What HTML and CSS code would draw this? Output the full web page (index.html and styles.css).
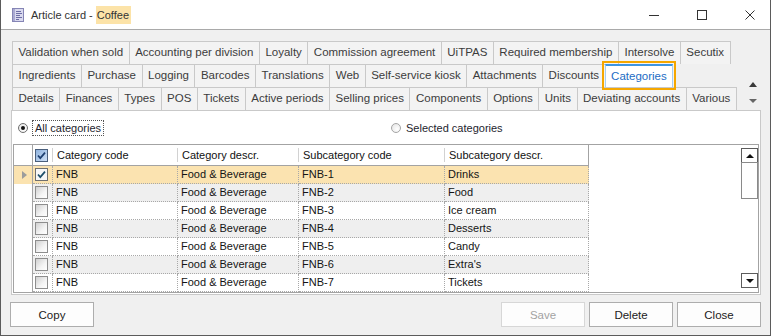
FILE: index.html
```html
<!DOCTYPE html>
<html>
<head>
    <link rel="stylesheet" href="styles.css">
</head>
<body>
    <div class="window">
        <div class="titlebar">
            <svg class="app-icon" width="12" height="14" viewBox="0 0 12 14">
                <rect x="0.5" y="0.5" width="11" height="13" fill="#d9d9ee" stroke="#8585b5"/>
                <rect x="1" y="1" width="2" height="12" fill="#a9a9d2"/>
                <path d="M4 3.5h5M4 5.5h6M4 7.5h4M4 9.5h6M4 11.5h3" stroke="#6d6da5" stroke-width="1"/>
            </svg>
            <span class="title">Article card - <span class="title-hl">Coffee</span></span>
            <div class="win-controls">
                <svg width="10" height="10" viewBox="0 0 10 10"><path d="M0 5.5h10" stroke="#333" stroke-width="1"/></svg>
                <svg width="10" height="10" viewBox="0 0 10 10"><rect x="0.5" y="0.5" width="9" height="9" fill="none" stroke="#333"/></svg>
                <svg width="10" height="10" viewBox="0 0 10 10"><path d="M0.5 0.5l9 9M9.5 0.5l-9 9" stroke="#333" stroke-width="1"/></svg>
            </div>
        </div>

        <div class="content">
            <div class="tabstrip">
                <div class="tab-rows">
                    <div class="tab-row">
                        <span class="tab">Validation when sold</span>
                        <span class="tab">Accounting per division</span>
                        <span class="tab">Loyalty</span>
                        <span class="tab">Commission agreement</span>
                        <span class="tab">UiTPAS</span>
                        <span class="tab">Required membership</span>
                        <span class="tab">Intersolve</span>
                        <span class="tab">Secutix</span>
                    </div>
                    <div class="tab-row">
                        <span class="tab">Ingredients</span>
                        <span class="tab">Purchase</span>
                        <span class="tab">Logging</span>
                        <span class="tab">Barcodes</span>
                        <span class="tab">Translations</span>
                        <span class="tab">Web</span>
                        <span class="tab">Self-service kiosk</span>
                        <span class="tab">Attachments</span>
                        <span class="tab">Discounts</span>
                        <span class="tab active">Categories</span>
                    </div>
                    <div class="tab-row">
                        <span class="tab">Details</span>
                        <span class="tab">Finances</span>
                        <span class="tab">Types</span>
                        <span class="tab">POS</span>
                        <span class="tab">Tickets</span>
                        <span class="tab">Active periods</span>
                        <span class="tab">Selling prices</span>
                        <span class="tab">Components</span>
                        <span class="tab">Options</span>
                        <span class="tab">Units</span>
                        <span class="tab">Deviating accounts</span>
                        <span class="tab">Various</span>
                    </div>
                </div>
                <div class="tab-arrows">
                    <span class="arrow-up"></span>
                    <span class="arrow-down"></span>
                </div>
            </div>

            <div class="panel">
                <div class="radios">
                    <label class="radio"><span class="radio-circle checked"></span><span class="focus-text">All categories</span></label>
                    <label class="radio"><span class="radio-circle"></span><span>Selected categories</span></label>
                </div>

                <div class="grid">
                    <div class="grid-body">
                        <div class="grid-head">
                            <div class="hcell ind"></div>
                            <div class="hcell chk-cell">
                                <span class="chk on blue"><svg width="11" height="11" viewBox="0 0 11 11"><path d="M2 5.5l2.3 2.6L9 2.6" fill="none" stroke="#1d3f70" stroke-width="1.7"/></svg></span>
                            </div>
                            <div class="hcell">Category code</div>
                            <div class="hcell">Category descr.</div>
                            <div class="hcell">Subcategory code</div>
                            <div class="hcell last">Subcategory descr.</div>
                        </div>

                        <div class="grid-row sel">
                            <div class="cell ind"><span class="row-pointer"></span></div>
                            <div class="cell chk-cell"><span class="chk on"><svg width="11" height="11" viewBox="0 0 11 11"><path d="M2 5.5l2.3 2.6L9 2.6" fill="none" stroke="#1d4f6a" stroke-width="1.7"/></svg></span></div>
                            <div class="cell">FNB</div>
                            <div class="cell">Food &amp; Beverage</div>
                            <div class="cell">FNB-1</div>
                            <div class="cell">Drinks</div>
                        </div>
                        <div class="grid-row alt">
                            <div class="cell ind"></div>
                            <div class="cell chk-cell"><span class="chk"></span></div>
                            <div class="cell">FNB</div>
                            <div class="cell">Food &amp; Beverage</div>
                            <div class="cell">FNB-2</div>
                            <div class="cell">Food</div>
                        </div>
                        <div class="grid-row">
                            <div class="cell ind"></div>
                            <div class="cell chk-cell"><span class="chk"></span></div>
                            <div class="cell">FNB</div>
                            <div class="cell">Food &amp; Beverage</div>
                            <div class="cell">FNB-3</div>
                            <div class="cell">Ice cream</div>
                        </div>
                        <div class="grid-row alt">
                            <div class="cell ind"></div>
                            <div class="cell chk-cell"><span class="chk"></span></div>
                            <div class="cell">FNB</div>
                            <div class="cell">Food &amp; Beverage</div>
                            <div class="cell">FNB-4</div>
                            <div class="cell">Desserts</div>
                        </div>
                        <div class="grid-row">
                            <div class="cell ind"></div>
                            <div class="cell chk-cell"><span class="chk"></span></div>
                            <div class="cell">FNB</div>
                            <div class="cell">Food &amp; Beverage</div>
                            <div class="cell">FNB-5</div>
                            <div class="cell">Candy</div>
                        </div>
                        <div class="grid-row alt">
                            <div class="cell ind"></div>
                            <div class="cell chk-cell"><span class="chk"></span></div>
                            <div class="cell">FNB</div>
                            <div class="cell">Food &amp; Beverage</div>
                            <div class="cell">FNB-6</div>
                            <div class="cell">Extra's</div>
                        </div>
                        <div class="grid-row">
                            <div class="cell ind"></div>
                            <div class="cell chk-cell"><span class="chk"></span></div>
                            <div class="cell">FNB</div>
                            <div class="cell">Food &amp; Beverage</div>
                            <div class="cell">FNB-7</div>
                            <div class="cell">Tickets</div>
                        </div>
                    </div>

                    <div class="vscroll">
                        <div class="sb-btn"><span class="sb-up"></span></div>
                        <div class="sb-thumb"></div>
                        <div class="sb-space"></div>
                        <div class="sb-btn"><span class="sb-down"></span></div>
                    </div>
                </div>
            </div>

            <div class="buttons">
                <button class="btn">Copy</button>
                <button class="btn disabled push">Save</button>
                <button class="btn">Delete</button>
                <button class="btn">Close</button>
            </div>
        </div>
    </div>
</body>
</html>
```

FILE: styles.css
```css
body {
    margin: 0;
    padding: 0;
    background: #ffffff;
    font-family: "Liberation Sans", Arial, sans-serif;
}

.window {
    width: 771px;
    height: 336px;
    box-sizing: border-box;
    border: 1px solid #5b5b5b;
    border-top: none;
    display: flex;
    flex-direction: column;
    overflow: hidden;
}

/* Title bar */
.titlebar {
    height: 29px;
    flex: none;
    display: flex;
    align-items: center;
    padding-left: 11px;
    background: #fff;
    border-bottom: 1px solid #a9a9a9;
}

.app-icon {
    margin-right: 7px;
    margin-top: 1px;
}

.title {
    font-size: 11px;
    color: #333;
}

.title-hl {
    background: #fce3a8;
    padding: 3px 2px 3px 1px;
}

.win-controls {
    margin-left: auto;
    display: flex;
    align-items: center;
    gap: 38px;
    padding-right: 15px;
    padding-top: 1px;
}

/* Main area */
.content {
    flex: 1;
    background: #f0f0f0;
    padding: 11px 9px 0 10px;
    display: flex;
    flex-direction: column;
}

.tabstrip {
    display: flex;
}

.tab-rows {
    flex: 1;
    padding-left: 1px;
}

.tab-row {
    display: flex;
    height: 23px;
}

.tab {
    height: 23px;
    box-sizing: border-box;
    border: 1px solid #c9c9c9;
    border-bottom: none;
    margin-right: -1px;
    padding: 0 5.5px;
    background: #f3f3f3;
    font-size: 11.5px;
    line-height: 21px;
    color: #3c3c3c;
    white-space: nowrap;
}

.tab.active {
    position: relative;
    z-index: 1;
    background: #fff;
    border-color: #a6cdf0;
    border-top: 2px solid #3d95e3;
    line-height: 20px;
    color: #1c6cc4;
    outline: 2px solid #f5a700;
    outline-offset: 1px;
}

.tab-arrows {
    width: 16px;
    display: flex;
    flex-direction: column;
    align-items: center;
    padding-top: 41px;
    gap: 12px;
}

.arrow-up {
    width: 0;
    height: 0;
    border-left: 4.5px solid transparent;
    border-right: 4.5px solid transparent;
    border-bottom: 5px solid #3a3a3a;
}

.arrow-down {
    width: 0;
    height: 0;
    border-left: 4.5px solid transparent;
    border-right: 4.5px solid transparent;
    border-top: 4px solid #666;
}

/* Tab page */
.panel {
    height: 185px;
    box-sizing: border-box;
    border: 1px solid #c9c9c9;
    background: #fff;
    padding: 0 1px 1px;
    display: flex;
    flex-direction: column;
}

.radios {
    height: 33px;
    flex: none;
    display: grid;
    grid-template-columns: 373px 1fr;
    align-items: center;
    padding-left: 5px;
    font-size: 11px;
    color: #1e1e2e;
}

.radio {
    display: flex;
    align-items: center;
}

.radio-circle {
    width: 10px;
    height: 10px;
    box-sizing: border-box;
    border-radius: 50%;
    border: 1px solid #a5a5a5;
    background: radial-gradient(circle at 65% 65%, #ffffff, #e2e2e2);
    margin-right: 5px;
    display: flex;
    align-items: center;
    justify-content: center;
}

.radio-circle.checked {
    border-color: #6f6f6f;
    margin-right: 6px;
}

.radio-circle.checked::after {
    content: "";
    width: 4px;
    height: 4px;
    border-radius: 50%;
    background: #111;
}

.focus-text {
    outline: 1px dotted #555;
    outline-offset: 1px;
    padding: 0 1px;
}

/* Grid */
.grid {
    height: 149px;
    box-sizing: border-box;
    border: 1px solid #a3a3a3;
    display: flex;
}

.grid-body {
    flex: 1;
}

.grid-head,
.grid-row {
    display: grid;
    grid-template-columns: 19px 20px 125px 121px 146px 144px;
}

.hcell {
    height: 21px;
    box-sizing: border-box;
    border-bottom: 1px solid #a3a3a3;
    padding-left: 4px;
    font-size: 11px;
    line-height: 20px;
    color: #111;
    background: linear-gradient(#d2d2d2, #d2d2d2) right center / 1px 14px no-repeat;
}

.hcell.ind {
    background: none;
    border-right: 1px solid #a3a3a3;
    padding: 0;
}

.hcell.last {
    background: none;
    border-right: 1px solid #a3a3a3;
}

.cell {
    height: 18px;
    box-sizing: border-box;
    border-right: 1px dotted #a8a8a8;
    border-bottom: 1px dotted #a8a8a8;
    padding-left: 3px;
    font-size: 11px;
    line-height: 17px;
    color: #141414;
    white-space: nowrap;
}

.cell.ind {
    border-right: 1px solid #a3a3a3;
    border-bottom: none;
    padding: 0;
    display: flex;
    align-items: center;
    justify-content: center;
}

.grid-row.alt .cell {
    background: #efefef;
}

.grid-row.alt .cell.ind {
    background: #fff;
}

.grid-row.sel .cell {
    background: #fbe3b0;
}

.row-pointer {
    width: 0;
    height: 0;
    border-top: 4.5px solid transparent;
    border-bottom: 4.5px solid transparent;
    border-left: 5px solid #9c9c9c;
    margin-left: 2px;
}

.chk-cell {
    display: flex;
    align-items: center;
    padding-left: 2px;
}

.chk {
    width: 13px;
    height: 13px;
    box-sizing: border-box;
    border: 1px solid #8d8d8d;
    background: linear-gradient(135deg, #d0d0d0, #f4f4f4 60%, #ffffff);
    display: flex;
    align-items: center;
    justify-content: center;
}

.chk.on {
    border-color: #6f6f6f;
    background: #f7f7f7;
}

.chk.on.blue {
    border-color: #4a5f7c;
    background: linear-gradient(135deg, #8fb3df, #cfe0f5);
}

/* Vertical scrollbar */
.vscroll {
    width: 17px;
    display: flex;
    flex-direction: column;
    padding: 3px 0 4px;
    background: #fff;
}

.sb-btn {
    height: 15px;
    box-sizing: border-box;
    border: 1px solid #5c5c5c;
    display: flex;
    align-items: center;
    justify-content: center;
}

.sb-up {
    width: 0;
    height: 0;
    border-left: 4px solid transparent;
    border-right: 4px solid transparent;
    border-bottom: 4px solid #111;
}

.sb-down {
    width: 0;
    height: 0;
    border-left: 4px solid transparent;
    border-right: 4px solid transparent;
    border-top: 4px solid #111;
}

.sb-thumb {
    height: 37px;
    box-sizing: border-box;
    border: 1px solid #8a8a8a;
    margin-top: -1px;
}

.sb-space {
    flex: 1;
}

/* Bottom buttons */
.buttons {
    display: flex;
    gap: 4px;
    padding-top: 7px;
    margin-left: -1px;
}

.btn {
    width: 84px;
    height: 25px;
    border: 1px solid #adadad;
    background: #fdfdfd;
    font-family: "Liberation Sans", Arial, sans-serif;
    font-size: 11.5px;
    color: #222;
    padding: 0;
}

.btn.disabled {
    color: #a3a3a3;
    border-color: #d7d7d7;
}

.btn.push {
    margin-left: auto;
}
```
